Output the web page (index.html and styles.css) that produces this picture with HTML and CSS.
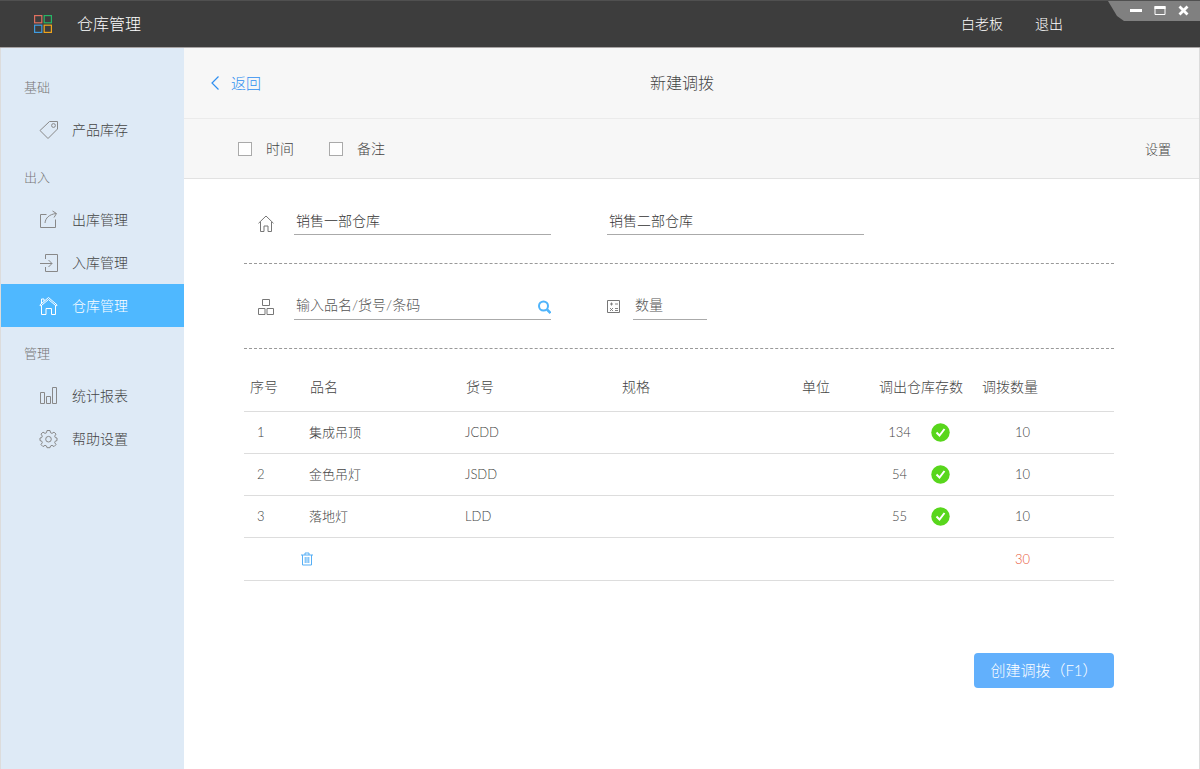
FILE: index.html
```
<!DOCTYPE html>
<html lang="zh-CN">
<head>
    <meta charset="UTF-8">
    <meta name="viewport" content="width=device-width, initial-scale=1.0">
    <title>仓库管理</title>
    <link rel="stylesheet" href="styles.css">
</head>
<body>

    <header class="topbar">
        <svg class="logo" width="18" height="18" viewBox="0 0 18 18" fill="none" stroke-width="1.200">
            <rect x="0.600" y="0.600" width="7.200" height="7.200" stroke="#e0705f"/>
            <rect x="10.200" y="0.600" width="7.200" height="7.200" stroke="#27b566"/>
            <rect x="0.600" y="10.200" width="7.200" height="7.200" stroke="#3f9ce0"/>
            <rect x="10.200" y="10.200" width="7.200" height="7.200" stroke="#f0a51c"/>
        </svg>
        <h1 class="brand">仓库管理</h1>
        <nav class="user-links">
            <a href="#">白老板</a>
            <a href="#">退出</a>
        </nav>
        <div class="window-buttons">
            <button type="button" aria-label="最小化">
                <svg width="12" height="12" viewBox="0 0 12 12"><path d="M0 4h12v3H0z" fill="#fff"/></svg>
            </button>
            <button type="button" aria-label="最大化">
                <svg width="12" height="12" viewBox="0 0 12 12"><path d="M1 1.500h10v8H1z" fill="none" stroke="#fff"/><path d="M.5 1h11v3H.5z" fill="#fff"/></svg>
            </button>
            <button type="button" aria-label="关闭">
                <svg width="12" height="12" viewBox="0 0 12 12"><path d="M1.500 1.500l8 8M9.500 1.500l-8 8" stroke="#fff" stroke-width="2.800"/></svg>
            </button>
        </div>
    </header>

    <div class="layout">
        <nav class="sidebar">
            <h2 class="group">基础</h2>
            <a class="item" href="#">
                <svg width="20" height="20" viewBox="0 0 20 20" fill="none" stroke="currentColor">
                    <path d="M10.500 1.500h8v7.500l-9.500 9.500-8-8z" stroke-linejoin="round"/>
                    <circle cx="14.500" cy="5.500" r="1.900"/>
                </svg>
                产品库存
            </a>

            <h2 class="group">出入</h2>
            <a class="item" href="#">
                <svg width="20" height="20" viewBox="0 0 20 20" fill="none" stroke="currentColor">
                    <path d="M7.500 4.500h-6v13h15v-8M6 13c.5-5 4-8.500 11-9.500M13.500 1l4 2.500-2.500 4"/>
                </svg>
                出库管理
            </a>
            <a class="item" href="#">
                <svg width="20" height="20" viewBox="0 0 20 20" fill="none" stroke="currentColor">
                    <path d="M6.500 6V1.500h12v17h-12V14M1 10.500h12M9.500 7l3.500 3.500-3.500 3.500"/>
                </svg>
                入库管理
            </a>
            <a class="item active" href="#">
                <svg width="20" height="20" viewBox="0 0 20 20" fill="none" stroke="currentColor">
                    <path d="M.8 9l8.700-7.500L18.200 9l-1 1-7.700-6.500L1.800 10zM2.500 7.500V3h2.500v2.300M2.500 9.500v9h4.500v-6h5.500v6h4v-9"/>
                </svg>
                仓库管理
            </a>

            <h2 class="group">管理</h2>
            <a class="item" href="#">
                <svg width="20" height="20" viewBox="0 0 20 20" fill="none" stroke="currentColor">
                    <path d="M1.500 6.500h4v11h-4zM7.500 10.500h4v7h-4zM13.500 1.500h4v16h-4z"/>
                </svg>
                统计报表
            </a>
            <a class="item" href="#">
                <svg width="20" height="20" viewBox="0 0 20 20" fill="none" stroke="currentColor" stroke-linejoin="round">
                    <path d="M8 1.500h3l.5 2.200 1.500.7 2-1.300 2 2-1.300 2 .6 1.500 1.700.4v2.600l-1.700.5-.6 1.500 1.300 2-2 2-2-1.300-1.500.7-.5 1.700H8l-.5-1.700-1.500-.7-2 1.300-2-2 1.300-2-.6-1.500L1 11.600V9l1.700-.4.6-1.500-1.300-2 2-2L6 4.400l1.500-.7z"/>
                    <circle cx="9.500" cy="10.200" r="2.800"/>
                </svg>
                帮助设置
            </a>
        </nav>

        <main class="main">
            <div class="titlebar">
                <a class="back" href="#">
                    <svg width="8" height="14" viewBox="0 0 8 14" fill="none" stroke="currentColor" stroke-width="1.200"><path d="M7.500.5L1 7l6.500 6.500"/></svg>
                    返回
                </a>
                <h2 class="title">新建调拨</h2>
            </div>

            <div class="options">
                <label class="check"><input type="checkbox">时间</label>
                <label class="check"><input type="checkbox">备注</label>
                <a class="settings" href="#">设置</a>
            </div>

            <form class="content">
                <div class="form-row">
                    <svg class="row-icon" width="16" height="18" viewBox="0 0 16 18" fill="none" stroke="currentColor">
                        <path d="M.5 9.300L8 2l7.500 7.300M2.500 8v9.500h3.500v-5.500h4v5.500h3.500V8"/>
                    </svg>
                    <div class="field"><input type="text" value="销售一部仓库" aria-label="调出仓库"></div>
                    <div class="field"><input type="text" value="销售二部仓库" aria-label="调入仓库"></div>
                </div>

                <div class="form-row">
                    <svg class="row-icon" width="16" height="18" viewBox="0 0 16 18" fill="none" stroke="currentColor">
                        <path d="M4.500.5h7v6h-7zM.5 9.500h6.500v6H.5zM9 9.500h6.500v6H9z"/>
                    </svg>
                    <div class="field">
                        <input type="text" placeholder="输入品名/货号/条码" aria-label="商品">
                        <button class="search" type="button" aria-label="搜索">
                            <svg width="13" height="14" viewBox="0 0 13 14" fill="none" stroke="#4fb4fb" stroke-width="2"><circle cx="5.500" cy="6" r="4.500"/><path d="M9 9.500l3.500 3.500" stroke-width="2.500"/></svg>
                        </button>
                    </div>
                    <label class="amount">
                        <svg class="row-icon" width="14" height="18" viewBox="0 0 14 18" fill="none" stroke="currentColor">
                            <path d="M.5 1.500h12v12H.5z"/>
                            <path d="M3 5h3M4.500 3.500v3M8 5h3M3 9l3 3M6 9l-3 3M8 9.500h3M8 11.500h3" stroke-width=".9"/>
                        </svg>
                        <input type="text" placeholder="数量" aria-label="数量">
                    </label>
                </div>

                <table class="goods">
                    <colgroup>
                        <col class="c-no"><col class="c-name"><col class="c-code"><col class="c-spec">
                        <col class="c-unit"><col class="c-stock"><col class="c-qty">
                    </colgroup>
                    <thead>
                        <tr>
                            <th class="no">序号</th>
                            <th>品名</th>
                            <th>货号</th>
                            <th>规格</th>
                            <th>单位</th>
                            <th>调出仓库存数</th>
                            <th>调拨数量</th>
                        </tr>
                    </thead>
                    <tbody>
                        <tr>
                            <td class="no">1</td><td>集成吊顶</td><td>JCDD</td><td></td><td></td>
                            <td><div class="stock"><span>134</span><svg width="19" height="19" viewBox="0 0 19 19"><circle cx="9.500" cy="9.500" r="9.200" fill="#58d61c"/><path d="M5.500 9.500l3 3 5-6.500" fill="none" stroke="#fff" stroke-width="2"/></svg></div></td>
                            <td class="qty">10</td>
                        </tr>
                        <tr>
                            <td class="no">2</td><td>金色吊灯</td><td>JSDD</td><td></td><td></td>
                            <td><div class="stock"><span>54</span><svg width="19" height="19" viewBox="0 0 19 19"><circle cx="9.500" cy="9.500" r="9.200" fill="#58d61c"/><path d="M5.500 9.500l3 3 5-6.500" fill="none" stroke="#fff" stroke-width="2"/></svg></div></td>
                            <td class="qty">10</td>
                        </tr>
                        <tr>
                            <td class="no">3</td><td>落地灯</td><td>LDD</td><td></td><td></td>
                            <td><div class="stock"><span>55</span><svg width="19" height="19" viewBox="0 0 19 19"><circle cx="9.500" cy="9.500" r="9.200" fill="#58d61c"/><path d="M5.500 9.500l3 3 5-6.500" fill="none" stroke="#fff" stroke-width="2"/></svg></div></td>
                            <td class="qty">10</td>
                        </tr>
                        <tr class="sum">
                            <td></td>
                            <td class="tools">
                                <button class="trash" type="button" aria-label="删除">
                                    <svg width="12" height="14" viewBox="0 0 12 14" fill="none" stroke="#55aef5"><path d="M0 3h12M4 3V1h4v2M1.500 3v10h9V3M4.200 5v6M6 5v6M7.800 5v6"/></svg>
                                </button>
                            </td>
                            <td></td><td></td><td></td><td></td>
                            <td class="qty total">30</td>
                        </tr>
                    </tbody>
                </table>

                <div class="actions">
                    <button class="submit" type="button">创建调拨（F1）</button>
                </div>
            </form>
        </main>
    </div>

</body>
</html>
```
FILE: styles.css
```
* {
    margin: 0;
    padding: 0;
    box-sizing: border-box;
}

body {
    min-height: 100vh;
    display: flex;
    flex-direction: column;
    font-family: Lato, "Noto Sans CJK SC", sans-serif;
    font-weight: 300;
    font-size: 14px;
    line-height: 20px;
    color: #444;
    background-color: #fff;
}

a {
    color: inherit;
    text-decoration: none;
}

button {
    border: none;
    background: none;
    font: inherit;
    cursor: pointer;
}

svg {
    display: block;
    flex: none;
}

h1, h2 {
    font-weight: 300;
}

/* Cabecera */
.topbar {
    position: relative;
    display: flex;
    align-items: center;
    height: 48px;
    padding: 0 137px 0 34px;
    background-color: #3d3d3d;
    border-top: 1px solid #505050;
    border-bottom: 1px solid #a8a4a4;
    color: #fff;
}

.brand {
    margin-left: 25px;
    font-size: 16px;
}

.user-links {
    display: flex;
    gap: 32px;
    margin-left: auto;
}

.window-buttons {
    position: absolute;
    top: 0;
    right: 0;
    display: flex;
    align-items: center;
    gap: 12px;
    height: 20px;
    padding: 0 10px 0 22px;
    background-color: #808080;
    clip-path: polygon(0 0, 100% 0, 100% 100%, 16px 100%, 9px 75%);
}

.layout {
    flex: 1;
    display: flex;
    border-left: 1px solid #dcdcdc;
    border-right: 1px solid #dcdcdc;
}

/* Menu lateral */
.sidebar {
    flex: none;
    width: 183px;
    padding-top: 13px;
    background-color: #deeaf6;
}

.group {
    padding: 16px 23px 11px;
    font-size: 13px;
    line-height: 20px;
    color: #777;
}

.item {
    display: flex;
    align-items: center;
    gap: 13px;
    height: 43px;
    padding-left: 38px;
}

.item svg {
    color: #888;
}

.item.active,
.item.active svg {
    color: #fff;
}

.item.active {
    background-color: #4fb8ff;
}

/* Contenido */
.main {
    flex: 1;
    min-width: 0;
}

.titlebar {
    display: grid;
    grid-template-columns: 1fr auto 1fr;
    align-items: center;
    height: 71px;
    padding: 0 46px 0 27px;
    background-color: #f7f7f7;
    border-bottom: 1px solid #ebebeb;
}

.back {
    display: flex;
    align-items: center;
    gap: 12px;
    font-size: 15px;
    color: #2f8ff0;
}

.title {
    font-size: 16px;
}

.options {
    display: flex;
    align-items: center;
    gap: 35px;
    height: 60px;
    padding: 0 28px 0 54px;
    background-color: #f7f7f7;
    border-bottom: 1px solid #e2e2e2;
}

.check {
    display: flex;
    align-items: center;
    gap: 14px;
}

.check input {
    appearance: none;
    width: 14px;
    height: 14px;
    border: 1px solid #aaa;
    background-color: #fff;
}

.check input:checked {
    background-color: #4fb8ff;
}

.settings {
    margin-left: auto;
    font-size: 13px;
}

.content {
    padding: 0 85px 40px 60px;
}

.form-row {
    display: flex;
    align-items: center;
    padding: 26px 0 28px 14px;
    border-bottom: 1px dashed #999;
}

.row-icon {
    margin-top: 6px;
    color: #777;
}

.field {
    display: flex;
    align-items: center;
    flex: 0 1 257px;
    height: 30px;
    margin: 0 56px 0 20px;
    border-bottom: 1px solid #aaa;
}

.field + .field {
    margin: 0;
}

.field input,
.amount input {
    flex: 1;
    min-width: 0;
    height: 28px;
    padding-left: 2px;
    border: none;
    outline: none;
    background: none;
    font: inherit;
    color: #333;
}

.field input::placeholder,
.amount input::placeholder {
    color: #555;
    opacity: 1;
}

.search {
    padding-top: 4px;
}

.amount {
    display: flex;
    align-items: center;
    gap: 12px;
}

.amount input {
    flex: none;
    width: 74px;
    height: 30px;
    border-bottom: 1px solid #aaa;
}

/* Tabla */
.goods {
    width: 100%;
    table-layout: fixed;
    border-collapse: collapse;
}

.c-no { width: 57px; }
.c-name, .c-code { width: 156px; }
.c-unit { width: 77px; }
.c-stock { width: 103px; }
.c-qty { width: 141px; }

.goods th {
    height: 62px;
    padding: 14px 0 0 9px;
    border-bottom: 1px solid #ddd;
    font-weight: 300;
    text-align: left;
    white-space: nowrap;
}

.goods td {
    height: 42px;
    padding-left: 8px;
    border-bottom: 1px solid #ddd;
    font-size: 13px;
}

.goods .sum td {
    height: 43px;
}

.goods th.no {
    padding-left: 6px;
}

.goods td.no {
    padding-left: 13px;
}

.goods td.qty {
    padding-left: 42px;
}

.goods td.total {
    color: #e8583a;
}

.goods td.tools {
    padding-left: 0;
}

.stock {
    display: flex;
    align-items: center;
    gap: 10px;
}

.stock span {
    width: 43px;
    text-align: center;
}

.trash {
    display: block;
}

.actions {
    display: flex;
    justify-content: flex-end;
    margin-top: 72px;
}

.submit {
    width: 140px;
    height: 35px;
    border-radius: 4px;
    background-color: #62b0fc;
    font-size: 15px;
    color: #fff;
}

.submit:hover {
    background-color: #4fa3f5;
}
```
